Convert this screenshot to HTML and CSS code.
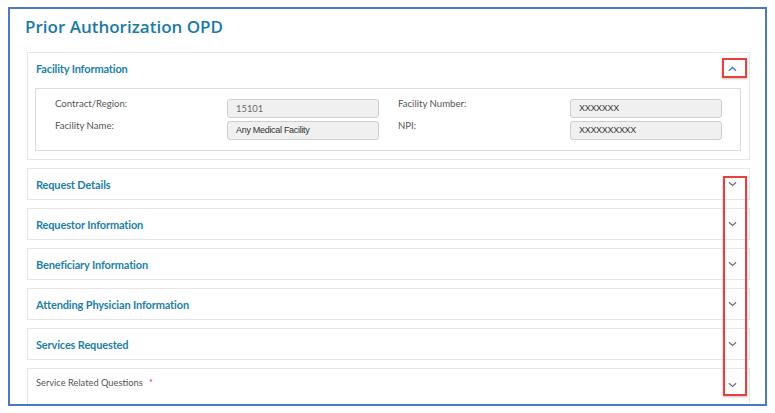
FILE: index.html
```html
<!DOCTYPE html>
<html>
<head>
<meta charset="utf-8">
<link rel="stylesheet" href="styles.css">
</head>
<body>
<div class="frame">
  <h1 class="title">Prior Authorization OPD</h1>

  <div class="card">
    <div class="card-head">
      <span class="card-title">Facility Information</span>
      <svg class="chev up" viewBox="0 0 10 6" width="9" height="6"><path d="M1 5 L5 1.4 L9 5" fill="none" stroke="#3b7ddd" stroke-width="1.6"/></svg>
    </div>
    <div class="card-body">
      <div class="fields">
        <div class="group">
          <div class="label">Contract/Region:</div>
          <div class="input light">15101</div>
          <div class="label">Facility Name:</div>
          <div class="input arial">Any Medical Facility</div>
        </div>
        <div class="group">
          <div class="label">Facility Number:</div>
          <div class="input arial">XXXXXXX</div>
          <div class="label">NPI:</div>
          <div class="input arial">XXXXXXXXXX</div>
        </div>
      </div>
    </div>
  </div>

  <div class="card collapsed">
    <div class="card-head">
      <span class="card-title">Request Details</span>
      <svg class="chev" viewBox="0 0 10 6" width="9" height="6"><path d="M1 1 L5 4.6 L9 1" fill="none" stroke="#6e6e78" stroke-width="1.4"/></svg>
    </div>
  </div>
  <div class="card collapsed">
    <div class="card-head">
      <span class="card-title">Requestor Information</span>
      <svg class="chev" viewBox="0 0 10 6" width="9" height="6"><path d="M1 1 L5 4.6 L9 1" fill="none" stroke="#6e6e78" stroke-width="1.4"/></svg>
    </div>
  </div>
  <div class="card collapsed">
    <div class="card-head">
      <span class="card-title">Beneficiary Information</span>
      <svg class="chev" viewBox="0 0 10 6" width="9" height="6"><path d="M1 1 L5 4.6 L9 1" fill="none" stroke="#6e6e78" stroke-width="1.4"/></svg>
    </div>
  </div>
  <div class="card collapsed">
    <div class="card-head">
      <span class="card-title">Attending Physician Information</span>
      <svg class="chev" viewBox="0 0 10 6" width="9" height="6"><path d="M1 1 L5 4.6 L9 1" fill="none" stroke="#6e6e78" stroke-width="1.4"/></svg>
    </div>
  </div>
  <div class="card collapsed">
    <div class="card-head">
      <span class="card-title">Services Requested</span>
      <svg class="chev" viewBox="0 0 10 6" width="9" height="6"><path d="M1 1 L5 4.6 L9 1" fill="none" stroke="#6e6e78" stroke-width="1.4"/></svg>
    </div>
  </div>
  <div class="card collapsed question">
    <div class="card-head">
      <span class="q-title">Service Related Questions <span class="req">*</span></span>
      <svg class="chev" viewBox="0 0 10 6" width="9" height="6"><path d="M1 1 L5 4.6 L9 1" fill="none" stroke="#6e6e78" stroke-width="1.4"/></svg>
    </div>
    <div class="q-body"></div>
  </div>

  <div class="mark mark-top"></div>
  <div class="mark mark-tall"></div>
</div>
</body>
</html>
```

FILE: styles.css
```css
* { box-sizing: border-box; }
html, body { margin: 0; padding: 0; background: #ffffff; }
body { font-family: Lato, "Open Sans", sans-serif; }

.frame {
  position: relative;
  margin: 7px 0 0 8px;
  width: 759px;
  height: 399px;
  border: 2px solid #4d78c9;
  padding: 6px 15px 0 17px;
  overflow: hidden;
  background: #fff;
}

.title {
  margin: 0 0 13px -2px;
  font-family: "Open Sans", sans-serif;
  font-size: 17px;
  line-height: 24px;
  font-weight: 600;
  color: #1b7aa6;
}

.card {
  border: 1px solid #e6e6e6;
  background: #fff;
  margin-bottom: 8px;
}

.card-head {
  height: 31px;
  display: flex;
  align-items: center;
  justify-content: space-between;
  padding: 0 12px 0 8px;
}
.collapsed .card-head { height: 30px; }

.card-title {
  font-size: 11px;
  font-weight: 700;
  letter-spacing: -0.15px;
  color: #1d7fab;
}

.chev { display: block; }

.card-body { padding: 4px 8px 8px 7px; }

.fields {
  border: 1px solid #dcdcdc;
  padding: 10px 19px 10px 19px;
  display: flex;
  gap: 19px;
}
.group {
  display: grid;
  grid-template-columns: 172px 152px;
  row-gap: 3px;
}
.label {
  font-size: 9.6px;
  line-height: 10px;
  color: #555;
}
.input {
  height: 19px;
  border: 1px solid #cfcfcf;
  border-radius: 3px;
  background: #f0f0f0;
  padding: 0 8px;
  font-size: 9px;
  line-height: 17px;
  color: #333;
}
.input.light { color: #6a6a6a; font-size: 9.4px; }
.input.arial { font-family: "Liberation Sans", Arial, sans-serif; letter-spacing: -0.3px; }

.question .card-head { align-items: flex-start; padding-top: 8px; }
.question .chev { margin-top: 5px; }
.q-title { font-size: 9.3px; color: #555; }
.req { color: #d9363e; margin-left: 4px; }
.q-body { height: 40px; }

.mark {
  position: absolute;
  border: 2px solid #ea3f3b;
  box-shadow: 0 1px 2px rgba(0,0,0,0.25);
}
.mark-top { left: 712px; top: 49px; width: 25px; height: 20px; }
.mark-tall { left: 713px; top: 167px; width: 24px; height: 220px; }
```
